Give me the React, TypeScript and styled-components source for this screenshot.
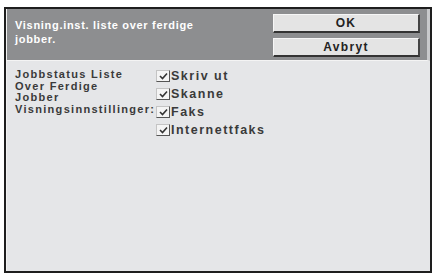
import React from "react";
import styled, { createGlobalStyle } from "styled-components";

const GlobalStyle = createGlobalStyle`
  html, body {
    margin: 0;
    padding: 0;
    background: #ffffff;
  }
  body {
    font-family: "Liberation Sans", Arial, sans-serif;
  }
`;

const Frame = styled.div`
  margin: 7px 0 0 4px;
  width: 424px;
  height: 262px;
  border: 2px solid #1e1e1e;
  background: #e5e6e8;
  display: flex;
  flex-direction: column;
`;

const Header = styled.div`
  height: 51px;
  flex-shrink: 0;
  background: #8d8e90;
  border-left: 1px solid #f2f2f2;
  border-right: 3px solid #c8c9cb;
  border-bottom: 1px solid #f4f4f4;
  display: flex;
  justify-content: space-between;
  padding: 0 7px 0 8px;
`;

const Title = styled.div`
  color: #ffffff;
  font-size: 11px;
  font-weight: bold;
  letter-spacing: 0.7px;
  line-height: 14px;
  padding-top: 9px;
`;

const Buttons = styled.div`
  display: flex;
  flex-direction: column;
  gap: 5px;
  padding-top: 5px;
  width: 147px;
`;

const Button = styled.button`
  height: 19px;
  background: #e4e4e4;
  border: none;
  border-top: 1px solid #f6f6f6;
  border-left: 1px solid #f6f6f6;
  border-right: 2px solid #444;
  border-bottom: 2px solid #333;
  font-family: "Liberation Sans", Arial, sans-serif;
  font-size: 12px;
  font-weight: bold;
  letter-spacing: 1.3px;
  color: #222;
  padding: 0;
`;

const Body = styled.div`
  flex: 1;
  border-left: 1px solid #f2f2f2;
  display: flex;
  padding: 7px 0 0 8px;
`;

const Label = styled.div`
  width: 141px;
  font-size: 11px;
  font-weight: bold;
  letter-spacing: 1.3px;
  line-height: 11.7px;
  color: #3a3a3a;
  padding-top: 1px;
  white-space: nowrap;
`;

const Options = styled.div`
  display: flex;
  flex-direction: column;
  gap: 3.3px;
`;

const Option = styled.div`
  display: flex;
  align-items: center;
  height: 15px;
  font-size: 12.5px;
  font-weight: bold;
  letter-spacing: 1.5px;
  color: #3a3a3a;
`;

const Box = styled.span`
  width: 14px;
  height: 12px;
  box-sizing: border-box;
  border-top: 1px solid #c4c4c4;
  border-left: 1px solid #c4c4c4;
  border-right: 1px solid #555;
  border-bottom: 1px solid #555;
  background: #f4f4f4;
  display: flex;
  align-items: center;
  justify-content: center;
  margin-right: 1px;
  flex-shrink: 0;
`;

const Check = () => (
  <svg width="9" height="8" viewBox="0 0 9 8">
    <path d="M1 4 L3.5 6.5 L8 1.5" fill="none" stroke="#333" strokeWidth="1.6" />
  </svg>
);

const options = ["Skriv ut", "Skanne", "Faks", "Internettfaks"];

export default function App() {
  return (
    <>
      <GlobalStyle />
      <Frame>
        <Header>
          <Title>
            Visning.inst. liste over ferdige
            <br />
            jobber.
          </Title>
          <Buttons>
            <Button>OK</Button>
            <Button>Avbryt</Button>
          </Buttons>
        </Header>
        <Body>
          <Label>
            Jobbstatus Liste
            <br />
            Over Ferdige
            <br />
            Jobber
            <br />
            Visningsinnstillinger:
          </Label>
          <Options>
            {options.map((o) => (
              <Option key={o}>
                <Box>
                  <Check />
                </Box>
                {o}
              </Option>
            ))}
          </Options>
        </Body>
      </Frame>
    </>
  );
}
